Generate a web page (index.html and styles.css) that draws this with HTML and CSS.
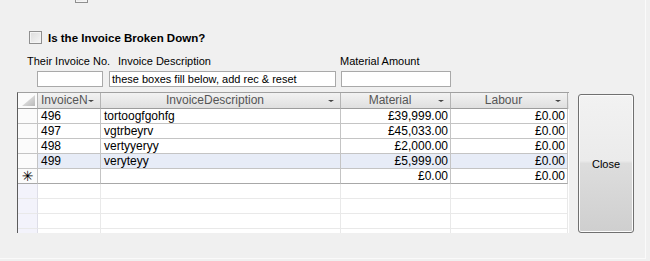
FILE: index.html
```html
<!DOCTYPE html>
<html lang="en">
<head>
  <meta charset="UTF-8" />
  <title>Invoice Breakdown</title>
  <link rel="stylesheet" href="styles.css">
</head>
<body>
  <div class="form">
    <div class="cut-top"><span class="check"></span></div>

    <label class="broken"><span class="check"></span>Is the Invoice Broken Down?</label>

    <div class="labels">
      <span class="lbl-no">Their Invoice No.</span>
      <span class="lbl-desc">Invoice Description</span>
      <span class="lbl-amt">Material Amount</span>
    </div>

    <div class="inputs">
      <div class="box box-no"></div>
      <div class="box box-desc">these boxes fill below, add rec &amp; reset</div>
      <div class="box box-amt"></div>
    </div>

    <div class="lower">
      <div class="grid">
        <div class="row head">
          <div class="sel corner">
            <svg width="17" height="13" viewBox="0 0 17 13">
              <defs>
                <linearGradient id="cg" x1="0" y1="0" x2="1" y2="1">
                  <stop offset="0" stop-color="#f4f4f4" />
                  <stop offset="1" stop-color="#b9b9b9" />
                </linearGradient>
              </defs>
              <polygon points="16,1 16,12 3,12" fill="url(#cg)" />
            </svg>
          </div>
          <div class="cell c-no">InvoiceN<span class="arrow"></span></div>
          <div class="cell c-desc">InvoiceDescription<span class="arrow"></span></div>
          <div class="cell c-mat">Material<span class="arrow"></span></div>
          <div class="cell c-lab">Labour<span class="arrow"></span></div>
        </div>

        <div class="row data">
          <div class="sel"></div>
          <div class="cell c-no">496</div>
          <div class="cell c-desc">tortoogfgohfg</div>
          <div class="cell c-mat num">£39,999.00</div>
          <div class="cell c-lab num">£0.00</div>
        </div>
        <div class="row data">
          <div class="sel"></div>
          <div class="cell c-no">497</div>
          <div class="cell c-desc">vgtrbeyrv</div>
          <div class="cell c-mat num">£45,033.00</div>
          <div class="cell c-lab num">£0.00</div>
        </div>
        <div class="row data">
          <div class="sel"></div>
          <div class="cell c-no">498</div>
          <div class="cell c-desc">vertyyeryy</div>
          <div class="cell c-mat num">£2,000.00</div>
          <div class="cell c-lab num">£0.00</div>
        </div>
        <div class="row data current">
          <div class="sel"></div>
          <div class="cell c-no">499</div>
          <div class="cell c-desc">veryteyy</div>
          <div class="cell c-mat num">£5,999.00</div>
          <div class="cell c-lab num">£0.00</div>
        </div>
        <div class="row data newrow">
          <div class="sel star">✳</div>
          <div class="cell c-no"></div>
          <div class="cell c-desc"></div>
          <div class="cell c-mat num">£0.00</div>
          <div class="cell c-lab num">£0.00</div>
        </div>

        <div class="row blank"><div class="sel"></div><div class="cell"></div><div class="cell"></div><div class="cell"></div><div class="cell"></div></div>
        <div class="row blank"><div class="sel"></div><div class="cell"></div><div class="cell"></div><div class="cell"></div><div class="cell"></div></div>
        <div class="row blank"><div class="sel"></div><div class="cell"></div><div class="cell"></div><div class="cell"></div><div class="cell"></div></div>
        <div class="row blank"><div class="sel"></div><div class="cell"></div><div class="cell"></div><div class="cell"></div><div class="cell"></div></div>
      </div>

      <button class="close-btn">Close</button>
    </div>
  </div>
</body>
</html>
```

FILE: styles.css
```css
body {
  margin: 0;
  background-color: #f0f0f0;
  font-family: "Liberation Sans", Arial, sans-serif;
  font-size: 11px;
  color: #000;
  overflow: hidden;
}

.form {
  width: 645px;
  height: 258px;
  border-right: 1px solid #fafafa;
  border-bottom: 1px solid #fafafa;
  overflow: hidden;
}

.check {
  display: inline-block;
  width: 11px;
  height: 11px;
  border: 1px solid #8f8f8f;
  background: linear-gradient(135deg, #dcdcdc, #f6f6f6);
  box-shadow: inset 0 0 0 1px #f4f4f4;
}

.cut-top {
  height: 4px;
  overflow: hidden;
  padding-left: 75px;
}

.cut-top .check {
  margin-top: -10px;
  display: block;
}

.broken {
  display: flex;
  align-items: center;
  gap: 6px;
  margin: 27px 0 0 29px;
  height: 13px;
  font-weight: bold;
  font-size: 11.5px;
}

.labels {
  display: flex;
  margin-top: 10px;
  padding-left: 27px;
  height: 14px;
  line-height: 14px;
  font-size: 11px;
}

.lbl-no { width: 91px; }
.lbl-desc { width: 222px; }

.inputs {
  display: flex;
  margin-top: 3px;
  padding-left: 37px;
  height: 16px;
}

.box {
  height: 14px;
  border: 1px solid #a9a9a9;
  background-color: #fff;
  line-height: 14px;
  padding-left: 2px;
  font-size: 11px;
}

.box-no { width: 62px; }
.box-desc { width: 223px; margin-left: 6px; }
.box-amt { width: 106px; margin-left: 5px; }

.lower {
  display: flex;
  align-items: flex-start;
  gap: 9px;
  margin-top: 5px;
  padding-left: 17px;
}

.grid {
  width: 551px;
  height: 140px;
  overflow: hidden;
  border-top: 1px solid #a0a0a0;
  border-left: 1px solid #5c5c5c;
  background-color: #fff;
  font-size: 12px;
}

.row {
  display: grid;
  grid-template-columns: 20px 63px 240px 110px 117px;
  height: 15px;
}

.row > div {
  box-sizing: border-box;
  border-right: 1px solid #c4c4c4;
  border-bottom: 1px solid #c4c4c4;
  overflow: hidden;
  white-space: nowrap;
}

.cell {
  padding: 0 2px 0 3px;
  line-height: 14px;
}

.num { text-align: right; }

.head {
  height: 16px;
  background: linear-gradient(#f2f2f2, #dedede);
  color: #555;
}

.head > div {
  border-right-color: #b4b4b4;
  border-bottom-color: #9c9c9c;
  line-height: 15px;
  position: relative;
}

.head .cell {
  text-align: center;
  padding-right: 14px;
}

.head .c-no {
  text-align: left;
}

.arrow {
  position: absolute;
  right: 6px;
  top: 7px;
  width: 0;
  height: 0;
  border-left: 3px solid transparent;
  border-right: 3px solid transparent;
  border-top: 2px solid #444;
}

.corner {
  padding: 1px 0 0 1px;
}

.corner svg {
  display: block;
}

.sel {
  background-color: #fbfbfb;
}

.current .cell {
  background-color: #e7ecf7;
}

.star {
  text-align: center;
  line-height: 14px;
  font-size: 14px;
  font-family: "DejaVu Sans", sans-serif;
  color: #000;
}

.newrow > div {
  border-bottom-color: #a8a8a8;
}

.blank > div {
  border-color: #e9e9e9;
}

.blank .sel {
  background-color: #f3f3fb;
  border-right-color: #dedee8;
}

.close-btn {
  margin-top: 2px;
  width: 56px;
  height: 139px;
  border: 1px solid #707070;
  border-radius: 3px;
  background: linear-gradient(#f2f2f2 0%, #ebebeb 48%, #dddddd 50%, #cfcfcf 100%);
  box-shadow: inset 0 0 0 1px #fcfcfc;
  font-family: "Liberation Sans", Arial, sans-serif;
  font-size: 11px;
  color: #000;
  padding: 0;
}
```
